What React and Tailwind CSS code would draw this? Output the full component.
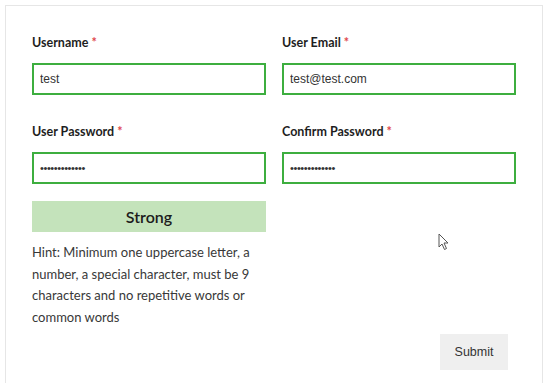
import React from "react";

const Field = ({ label, type = "text", value }) => (
    <div className="flex flex-col">
        <label className="h-4 text-[12.5px] leading-4 font-bold text-[#1e1e1e] font-['Lato',sans-serif]">
            {label} <span className="text-[#e0474c]">*</span>
        </label>
        <input
            type={type}
            value={value}
            readOnly
            className={`mt-3 h-8 w-full border-2 border-[#3dae3f] bg-white px-[6px] text-[#333] outline-none font-['Liberation_Sans',Arial,sans-serif] ${type === "password" ? "text-[11px] tracking-[-0.4px]" : "text-[12px]"}`}
        />
    </div>
);

const Pointer = () => (
    <svg className="absolute left-[438px] top-[228px]" width="11" height="18" viewBox="0 0 11 18">
        <path d="M1 1 L1 14 L4 11 L6.5 16.5 L8.5 15.5 L6 10 L10 10 Z" fill="#fff" stroke="#555" strokeWidth="1" strokeLinejoin="round" />
    </svg>
);

export default function App() {
    return (
        <div className="relative h-[389px] w-[550px] bg-white">
            <div className="ml-[5px] mt-[5px] h-[378px] w-[538px] border border-b-0 border-[#e6e6e6] px-[26px] pt-[29px]">
                <div className="grid grid-cols-2 gap-x-4 gap-y-[29px]">
                    <Field label="Username" value="test" />
                    <Field label="User Email" value="test@test.com" />
                    <Field label="User Password" type="password" value="testtest12345" />
                    <Field label="Confirm Password" type="password" value="testtest12345" />
                    <div>
                        <div className="mt-[-12px] flex h-[31px] items-center justify-center bg-[#c4e3bb] text-[16px] font-semibold text-[#1c1c1c] font-['Lato',sans-serif]">
                            Strong
                        </div>
                        <p className="mt-[10px] text-[13px] leading-[21.5px] text-[#383838] font-['Lato',sans-serif]">
                            Hint: Minimum one uppercase letter, a<br />
                            number, a special character, must be 9<br />
                            characters and no repetitive words or<br />
                            common words
                        </p>
                    </div>
                </div>
                <div className="mt-[6px] flex justify-end pr-2">
                    <button className="h-9 w-[68px] bg-[#efefef] text-[12.5px] text-[#333] font-['Liberation_Sans',Arial,sans-serif]">
                        Submit
                    </button>
                </div>
            </div>
            <Pointer />
        </div>
    );
}
